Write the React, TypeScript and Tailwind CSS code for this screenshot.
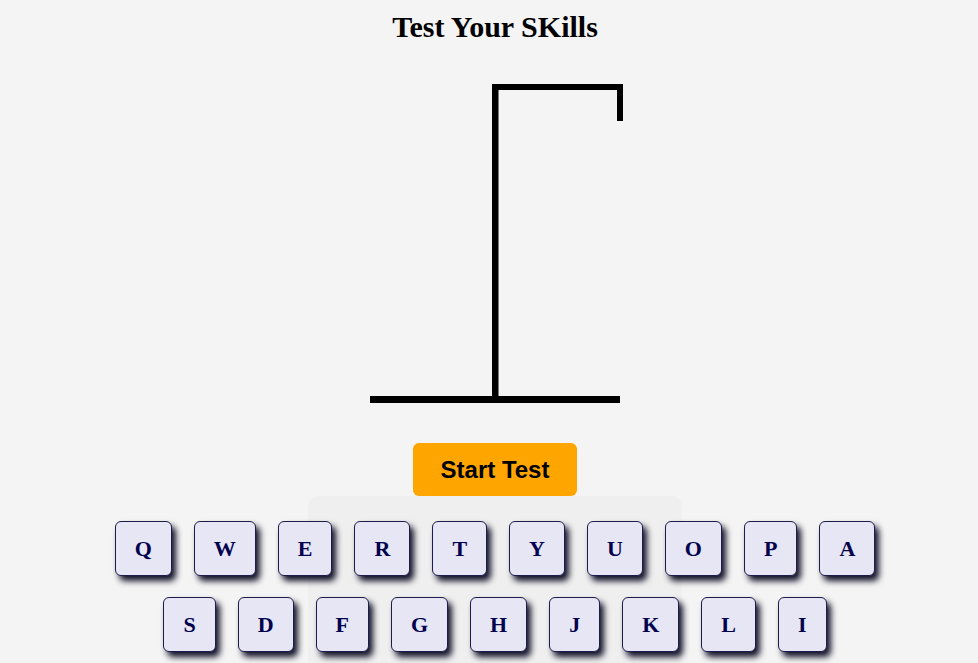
import React from 'react';

const rows = [
  ['Q', 'W', 'E', 'R', 'T', 'Y', 'U', 'O', 'P', 'A'],
  ['S', 'D', 'F', 'G', 'H', 'J', 'K', 'L', 'I'],
];

function Gallows() {
  return (
    <svg width="250" height="330" viewBox="0 0 250 330" className="overflow-visible">
      {/* base */}
      <rect x="0" y="316" width="250" height="7" fill="#000" />
      {/* pole */}
      <rect x="122" y="4" width="6.5" height="313" fill="#000" />
      {/* beam */}
      <rect x="122" y="4" width="131" height="6" fill="#000" />
      {/* rope */}
      <rect x="247" y="4" width="6" height="37" fill="#000" />
    </svg>
  );
}

export default function App() {
  return (
    <div className="min-h-[663px] bg-[#f4f4f4] pl-3 overflow-hidden">
      <div className="flex flex-col items-center">
        <h1 className="mt-[10px] text-[30px] leading-[34px] font-bold text-black font-['Liberation_Serif',serif]">
          Test Your SKills
        </h1>

        <div className="mt-[36px]">
          <Gallows />
        </div>

        <button className="mt-[33px] rounded-md bg-[#ffa500] px-[28px] py-[13px] text-[24px] leading-[27px] font-bold text-black font-['Liberation_Sans',Arial,sans-serif]">
          Start Test
        </button>

        {/* word area */}
        <div className="h-[200px] w-[374px] rounded-[10px] bg-[#efefef]" />

        <div className="-mt-[175px] flex flex-col items-center gap-[21px]">
          {rows.map((row, i) => (
            <div key={i} className="flex gap-[22px]">
              {row.map((letter) => (
                <button
                  key={letter}
                  className="rounded-md border border-[#1c1c4c] bg-[#e6e6f5] px-[19px] py-[14px] text-[22px] leading-[25px] font-bold text-[#00004d] font-['Liberation_Serif',serif] shadow-[4px_5px_6px_rgba(5,5,30,0.95)]"
                >
                  {letter}
                </button>
              ))}
            </div>
          ))}
        </div>
      </div>
    </div>
  );
}
